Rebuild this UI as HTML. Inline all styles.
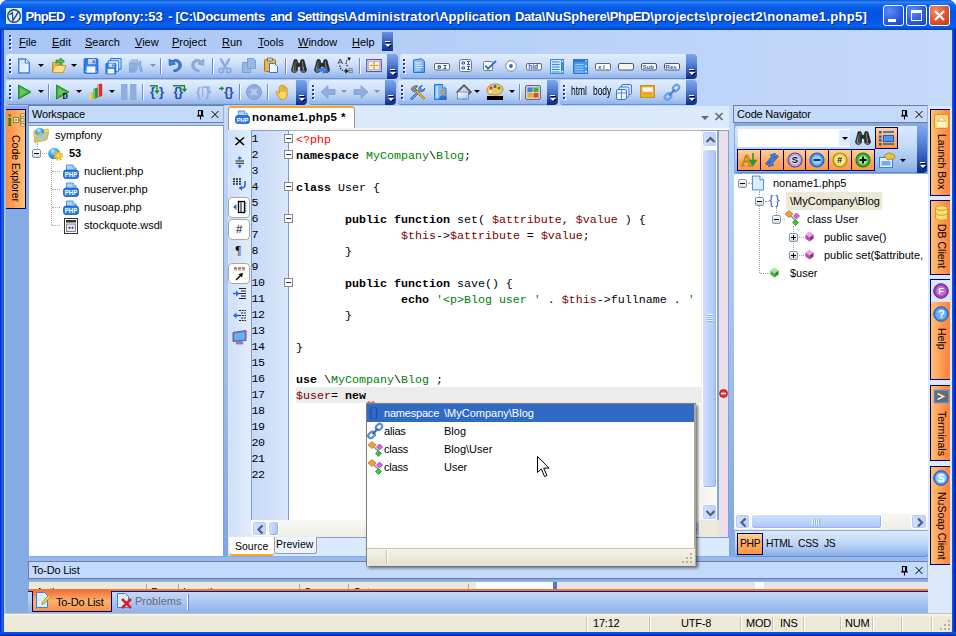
<!DOCTYPE html>
<html><head><meta charset="utf-8"><title>PhpED - sympfony::53</title>
<style>
*{box-sizing:border-box;margin:0;padding:0}
html,body{width:956px;height:636px;overflow:hidden;background:#fff}
body{position:relative;font-family:"Liberation Sans",sans-serif;font-size:11px;color:#000;line-height:1}
div,span,svg,i,b{position:absolute;white-space:nowrap}
u{text-decoration:underline}
svg{overflow:visible}
#win{left:0;top:0;width:956px;height:636px;background:linear-gradient(to right,#0019cf 0,#0831d9 1px,#166aee 2px,#0855dd 4px,#0855dd 952px,#0a5bd8 953px,#0831d9 954px,#001ea0 956px);border-radius:8px 8px 0 0;overflow:hidden}
#title{left:0;top:0;width:956px;height:30px;background:linear-gradient(#0a54d8 0,#2f86f5 7%,#0a62ec 17%,#0454e0 40%,#0458e8 70%,#0762f3 86%,#0450d8 94%,#0340b8 100%)}
#title .t{left:25px;top:10px;color:#fff;font-weight:bold;font-size:13px;text-shadow:1px 1px 0 #0c2c86}
.wb{top:5px;width:21px;height:21px;border:1px solid #fff;border-radius:3px;background:radial-gradient(circle at 30% 25%,#5b8cf4,#2a5be0 60%,#1c45c4)}
.wb.x{background:radial-gradient(circle at 30% 25%,#ee8a6a,#d9502c 60%,#b8391a)}
#client{left:4px;top:30px;width:948px;height:602px;background:#84abe3;overflow:hidden}
#dock{left:0;top:0;width:948px;height:76px;background:linear-gradient(to right,#a9c5f5,#c4dafa)}
.mi{top:37px;font-size:11px}
.tb{height:24px;border-radius:3px 0 0 3px;background:linear-gradient(#e1edfd 0,#cfe0fa 40%,#b0cbf3 75%,#8fb3e9 100%);box-shadow:0 1px 0 #6a8ccc}
.tbend{width:11px;height:25px;border-radius:0 4px 4px 0;background:linear-gradient(#80a6e8 0,#5a86d8 35%,#2a56b8 70%,#0a2a8a 100%)}
.chev{width:6px;height:7px}
.chev:before{content:"";position:absolute;left:1px;top:1px;width:5px;height:1px;background:#000;box-shadow:none}
.chev:after{content:"";position:absolute;left:0;top:0;width:5px;height:1px;background:#fff}
.chev i{left:0;top:3px;width:0;height:0;border-left:3px solid transparent;border-right:3px solid transparent;border-top:3px solid #fff;filter:drop-shadow(1px 1px 0 #000)}
.grip{left:3px;top:5px;width:3px;height:16px;background:repeating-linear-gradient(#24408c 0,#24408c 2px,transparent 2px,transparent 4px) 0 0/2px 15px no-repeat,repeating-linear-gradient(#fff 0,#fff 2px,transparent 2px,transparent 4px) 1px 1px/2px 15px no-repeat}
.sep{top:4px;width:2px;height:16px;border-left:1px solid #6a8ccc;border-right:1px solid #f4f8fe}
.dd{width:0;height:0;border-left:3px solid transparent;border-right:3px solid transparent;border-top:3px solid #000}
.dd.g{border-top-color:#8d8d8d}
.phdr{height:18px;background:#c4dafa;border:1px solid #7b8ca8;border-color:#6f7f9c #9fb4d6 #6f7f9c #6f7f9c;font-size:11px}
.phdr span{left:3px;top:3px;letter-spacing:-.2px}
.vt{width:20px;border:1px solid #00007c;border-right:none;background:linear-gradient(to right,#ffc274,#ff8a46 80%,#ff8240)}
.vt .l{writing-mode:vertical-rl;font-size:10.5px;line-height:13px;width:13px}
.ln{left:251.500px;font-family:"Liberation Mono",monospace;font-size:11.670px;letter-spacing:-.6px;line-height:16px}
.cl{left:296px;font-family:"Liberation Mono",monospace;font-size:11.67px;line-height:16px;white-space:pre}
.cl b{position:static;font-weight:normal}
.cl b.k{font-weight:bold}.cl b.r{color:#f00}.cl b.g{color:#008000}.cl b.m{color:#800000}
.sbb{border:1px solid #fff;border-radius:3px;background:linear-gradient(to right,#d3e1fd,#bdd0fb);box-shadow:inset 0 0 0 1px #b8cbf6}
.sbt{border:1px solid #fff;border-radius:3px;background:linear-gradient(to right,#d0dffc,#b9cdfb 70%,#a9c0f6);box-shadow:inset -1px -1px 0 #98b4ee}
</style></head><body>
<div id="win">
<div id="title">
 <svg style="left:6px;top:8px" width="16" height="16" viewBox="0 0 16 16"><rect x="0" y="0" width="16" height="16" fill="#d9e7f6"/><circle cx="8" cy="8" r="6.300" fill="#e4eef9" stroke="#1d4877" stroke-width="1.400"/><path d="M3.200 6.800L6.400 4.600L6.900 12.600L12.400 3.800" fill="none" stroke="#1d4877" stroke-width="1.300"/></svg>
 <span class="t" style="left:25.5px;letter-spacing:-0.68px">PhpED</span><span class="t" style="left:70.3px;letter-spacing:-0.34px">-</span><span class="t" style="left:78.3px;letter-spacing:-0.01px">sympfony::53</span><span class="t" style="left:168.2px;letter-spacing:-0.34px">-</span><span class="t" style="left:175.5px;letter-spacing:-0.23px">[C:\Documents</span><span class="t" style="left:270.5px;letter-spacing:-0.58px">and</span><span class="t" style="left:296.9px;letter-spacing:-0.50px">Settings</span><span class="t" style="left:344.2px;letter-spacing:0.18px">\Administrator</span><span class="t" style="left:435.5px;letter-spacing:0.04px">\Application</span><span class="t" style="left:515.1px;letter-spacing:-0.42px">Data</span><span class="t" style="left:541.8px;letter-spacing:-0.02px">\NuSphere</span><span class="t" style="left:606.6px;letter-spacing:-0.47px">\PhpED</span><span class="t" style="left:650.2px;letter-spacing:0.17px">\projects</span><span class="t" style="left:706.2px;letter-spacing:0.29px">\project2</span><span class="t" style="left:763.3px;letter-spacing:0.30px">\noname1.php5]</span>
 <div class="wb" style="left:883px"><div style="left:4px;top:13px;width:8px;height:3px;background:#fff"></div></div>
 <div class="wb" style="left:906px"><div style="left:4px;top:4px;width:11px;height:11px;border:1px solid #fff;border-top-width:3px"></div></div>
 <div class="wb x" style="left:929px"><svg style="left:4px;top:4px" width="11" height="11" viewBox="0 0 11 11"><path d="M1 1 L10 10 M10 1 L1 10" stroke="#fff" stroke-width="2.2"/></svg></div>
</div>
<div id="client"><div id="s" style="left:-4px;top:-30px;width:956px;height:636px">

<div id="dock" style="left:4px;top:30px"></div>
<!-- menu -->
<div class="grip" style="left:9px;top:35px;height:15px"></div>
<span class="mi" style="left:19px"><u>F</u>ile</span>
<span class="mi" style="left:52px"><u>E</u>dit</span>
<span class="mi" style="left:85px"><u>S</u>earch</span>
<span class="mi" style="left:135px"><u>V</u>iew</span>
<span class="mi" style="left:172px"><u>P</u>roject</span>
<span class="mi" style="left:222px"><u>R</u>un</span>
<span class="mi" style="left:258px"><u>T</u>ools</span>
<span class="mi" style="left:298px"><u>W</u>indow</span>
<span class="mi" style="left:352px"><u>H</u>elp</span>
<div style="left:382px;top:32px;width:11px;height:19px;background:linear-gradient(#6a92e0,#3a66c4 50%,#0c2f92)"><div class="chev" style="left:3px;top:9px"><i></i></div></div>
<!-- toolbars -->
<div class="tb" style="left:6px;top:54px;width:382px"><div class="grip"></div></div>
<div class="tbend" style="left:387px;top:54px"><div class="chev" style="left:3px;top:15px"><i></i></div></div>
<div class="tb" style="left:400px;top:54px;width:287px"><div class="grip"></div></div>
<div class="tbend" style="left:686px;top:54px"><div class="chev" style="left:3px;top:15px"><i></i></div></div>
<div class="tb" style="left:6px;top:80px;width:291px"><div class="grip"></div></div>
<div class="tbend" style="left:296px;top:80px"><div class="chev" style="left:3px;top:15px"><i></i></div></div>
<div class="tb" style="left:309px;top:80px;width:77px"><div class="grip"></div></div>
<div class="tbend" style="left:385px;top:80px"><div class="chev" style="left:3px;top:15px"><i></i></div></div>
<div class="tb" style="left:398px;top:80px;width:150px"><div class="grip"></div></div>
<div class="tbend" style="left:547px;top:80px"><div class="chev" style="left:3px;top:15px"><i></i></div></div>
<div class="tb" style="left:560px;top:80px;width:127px"><div class="grip"></div></div>
<div class="tbend" style="left:686px;top:80px"><div class="chev" style="left:3px;top:15px"><i></i></div></div>
<svg style="left:16px;top:58px" width="16" height="16" viewBox="0 0 16 16"><defs><linearGradient id="dg" x1="0" y1="0" x2="1" y2="1"><stop offset="0" stop-color="#cfe4fb"/><stop offset="1" stop-color="#f4faff"/></linearGradient></defs><path d="M2.700 1h6.800l3.800 3.800v10.200h-10.600z" fill="url(#dg)" stroke="#3b82e0" stroke-width="1.400"/><path d="M9.300 1v4h4" fill="#e8f3fe" stroke="#3b82e0" stroke-width="1.100"/></svg>
<div class="dd" style="left:38px;top:64px"></div>
<svg style="left:51px;top:57px" width="16" height="16" viewBox="0 0 16 16"><path d="M1.500 15V5.500h3.500l1.200 1.500h5.300v2" fill="#e9b935" stroke="#b98d1e" stroke-width=".9"/><path d="M1.500 15.500L3.800 8.500h11l-2.600 7z" fill="#fbe18c" stroke="#c39a24" stroke-width=".9"/><path d="M5 3h4.200V1l4.300 3.300-4.300 3.300v-2H5z" fill="#4fc24f" stroke="#1f8a1f" stroke-width=".8"/></svg>
<div class="dd" style="left:71px;top:64px"></div>
<svg style="left:83px;top:58px" width="16" height="16" viewBox="0 0 16 16"><rect x="1.200" y=".800" width="13.600" height="14.400" rx=".6" fill="#2482f2" stroke="#0f5fd2" stroke-width="1"/><rect x="5" y="1.400" width="7.600" height="4.800" fill="#cfcfcf"/><rect x="5" y="1.400" width="7.600" height="1.500" fill="#e6e6e6"/><rect x="9.700" y="2.300" width="2" height="3" fill="#2482f2"/><rect x="3.600" y="8.400" width="8.800" height="6.300" fill="#f7f4ec"/><rect x="2" y="13.200" width="1" height="1" fill="#cfe4fc"/><rect x="13" y="13.200" width="1" height="1" fill="#cfe4fc"/></svg>
<svg style="left:105px;top:58px" width="17" height="17" viewBox="0 0 17 17"><rect x="5.500" y=".600" width="10.500" height="10.500" rx=".6" fill="#eaf3fe" stroke="#1f78ea" stroke-width="1.100"/><rect x="3.200" y="2.700" width="10.500" height="10.500" rx=".6" fill="#eaf3fe" stroke="#1f78ea" stroke-width="1.100"/><g transform="translate(0,4.700) scale(.74)"><rect x="1.200" y=".800" width="13.600" height="14.400" rx=".6" fill="#2482f2" stroke="#0f5fd2" stroke-width="1"/><rect x="5" y="1.400" width="7.600" height="4.800" fill="#cfcfcf"/><rect x="5" y="1.400" width="7.600" height="1.500" fill="#e6e6e6"/><rect x="9.700" y="2.300" width="2" height="3" fill="#2482f2"/><rect x="3.600" y="8.400" width="8.800" height="6.300" fill="#f7f4ec"/><rect x="2" y="13.200" width="1" height="1" fill="#cfe4fc"/><rect x="13" y="13.200" width="1" height="1" fill="#cfe4fc"/></g></svg>
<svg style="left:128px;top:58px" width="16" height="16" viewBox="0 0 16 16"><path d="M1 4.500l2.500-3h6.500v10l-2.500 3H1z" fill="#90b1e3"/><path d="M1 4.500h6.500v10H1z" fill="#86a9de"/><path d="M1 4.500l2.500-3h6.500l-2.500 3z" fill="#a5c1ea"/><path d="M2 7h4.500M2 9h4.500" stroke="#a5c1ea" stroke-width=".8"/><path d="M11 3.500l1.200-1.500 1.300 2.200-.5 2 2 7-1.600 1.300-1.700-1-1-5.500-1-1.500z" fill="#8aacdf"/></svg>
<div class="dd g" style="left:150px;top:64px"></div>
<div class="sep" style="left:160px;top:58px"></div>
<svg style="left:167px;top:57px" width="16" height="16" viewBox="0 0 16 16"><path d="M2 2.2l.4 6.2 6-1.4-2.3-1.6c2.6-1.6 5.6-.2 5.8 2.6.2 2.6-1.8 4.6-5.2 5.2l.4 1.6c4.8-.6 7.6-3.4 7.2-7.2C13.8 3 9.200 1 5 3.800z" fill="#3f80dc" stroke="#1d56b0" stroke-width=".8"/></svg>
<svg style="left:190px;top:57px" width="16" height="16" viewBox="0 0 16 16"><g transform="translate(16,0) scale(-1,1)"><path d="M2 2.2l.4 6.2 6-1.4-2.3-1.600c2.600-1.600 5.600-.2 5.800 2.600.2 2.600-1.800 4.600-5.200 5.200l.4 1.600c4.800-.6 7.600-3.400 7.200-7.200C13.800 3 9.200 1 5 3.800z" fill="#8eaede" stroke="#7d9fd4" stroke-width=".8"/></g></svg>
<div class="sep" style="left:212px;top:58px"></div>
<svg style="left:217px;top:58px" width="16" height="16" viewBox="0 0 16 16"><path d="M3.500 .5l5.500 10M12.500 .5L7 10.500" stroke="#86a8de" stroke-width="2.400" fill="none"/><circle cx="4.300" cy="12.500" r="2.200" fill="none" stroke="#86a8de" stroke-width="1.700"/><circle cx="11.700" cy="12.500" r="2.200" fill="none" stroke="#86a8de" stroke-width="1.700"/></svg>
<svg style="left:241px;top:57px" width="16" height="16" viewBox="0 0 16 16"><path d="M1.500 5.500h6l2 2v8h-8z" fill="#9ab8e6" stroke="#7d9fd4"/><path d="M6.500 1.500h6l2 2v8h-8z" fill="#9ab8e6" stroke="#7d9fd4"/></svg>
<svg style="left:263px;top:57px" width="16" height="16" viewBox="0 0 16 16"><rect x="1.500" y="2.500" width="11" height="12" rx="1" fill="#e9b94a" stroke="#a37a18"/><rect x="4.500" y="1" width="5" height="3" fill="#c8c8d0" stroke="#666" stroke-width=".7"/><path d="M6.500 6.500h5l3 3v6h-8z" fill="#eef5fd" stroke="#3a78d0"/></svg>
<div class="sep" style="left:285px;top:58px"></div>
<svg style="left:291px;top:58px" width="17" height="16" viewBox="0 0 17 16"><path d="M3 2.200c0-1 3.200-1 3.200 0l.6 3h2.400l.6-3c0-1 3.200-1 3.200 0l2.500 9.500c.3 3.800-6.300 3.800-6-.2v-3h-3v3c.3 4-6.300 4-6 .2z" fill="#2b2b2b" stroke="#000" stroke-width=".5"/><path d="M3.600 3l-2 8.500c0 1.500 1 2 1.500 2z" fill="#8c8c8c"/><path d="M10.800 2.600l.5 0 1.800 9-1.200.6z" fill="#9a9a9a"/><path d="M4.500 2.500l1 0-.5 9-1.200 1z" fill="#555"/><ellipse cx="3.700" cy="13.300" rx="2.300" ry="1.100" fill="#6a6a6a"/><ellipse cx="12.300" cy="13.300" rx="2.300" ry="1.100" fill="#6a6a6a"/></svg>
<svg style="left:314px;top:58px" width="17" height="16" viewBox="0 0 17 16"><path d="M3 2.200c0-1 3.200-1 3.200 0l.6 3h2.400l.6-3c0-1 3.200-1 3.200 0l2.500 9.500c.3 3.800-6.300 3.800-6-.2v-3h-3v3c.3 4-6.300 4-6 .2z" fill="#2b2b2b" stroke="#000" stroke-width=".5"/><path d="M3.600 3l-2 8.500c0 1.500 1 2 1.500 2z" fill="#8c8c8c"/><path d="M10.800 2.600l.5 0 1.800 9-1.200.6z" fill="#9a9a9a"/><path d="M4.500 2.500l1 0-.5 9-1.200 1z" fill="#555"/><ellipse cx="3.700" cy="13.300" rx="2.300" ry="1.100" fill="#6a6a6a"/><ellipse cx="12.300" cy="13.300" rx="2.300" ry="1.100" fill="#6a6a6a"/><path d="M3 10.500h6V8.200l5 3.600-5 3.600v-2.300H3z" fill="#3f8ae8" stroke="#1d56b0" stroke-width=".6"/></svg>
<svg style="left:337px;top:57px" width="18" height="18" viewBox="0 0 18 18"><text x="0.500" y="7" font-size="8" font-family="Liberation Sans,sans-serif" fill="#222">A</text><text x="11" y="16" font-size="8" font-family="Liberation Sans,sans-serif" fill="#666">B</text><path d="M3 8.500c0 4 2.500 5.500 6 5.500" fill="none" stroke="#111" stroke-width="1.200" stroke-dasharray="1.300 1.200"/><path d="M8.500 11.300l3 2.700-3 2.700z" fill="#111"/><path d="M10.500 9c-2-1.500-2-5.500 1.500-7.500" fill="none" stroke="#111" stroke-width="1.200" stroke-dasharray="1.300 1.200"/><path d="M10.500 .3l3.300.5-1.500 3z" fill="#111"/></svg>
<div class="sep" style="left:359px;top:58px"></div>
<svg style="left:366px;top:58px" width="16" height="15" viewBox="0 0 18 17"><rect x=".7" y="1.700" width="16.600" height="13.600" fill="#d9d3ea" stroke="#5c5a92" stroke-width="1.200"/><rect x="3" y="4" width="12" height="9" fill="#faf0dc" stroke="#a9a2c8" stroke-width=".8"/><path d="M9 5v7M5 8.500h8" stroke="#e8a020" stroke-width="1.100"/><path d="M9 4.300l1.500 1.700h-3zM9 12.700l1.500-1.700h-3zM4.300 8.500l1.700-1.500v3zM13.700 8.500l-1.700-1.500v3z" fill="#e8a020"/></svg>
<svg style="left:411px;top:58px" width="17" height="17" viewBox="0 0 17 17"><defs><linearGradient id="fg" x1="0" y1="0" x2="1" y2="1"><stop offset="0" stop-color="#a8d2fa"/><stop offset="1" stop-color="#4e9aea"/></linearGradient></defs><path d="M2.500 2l8-1.300 3 2.500v11.300h-11z" fill="url(#fg)" stroke="#2a72d0"/><path d="M4.500 5h6M4.500 7.300h7M4.500 9.600h7M4.500 11.900h5" stroke="#e4f1fe" stroke-width="1"/></svg>
<svg style="left:434px;top:58px" width="17" height="17" viewBox="0 0 17 17"><rect x="0.5" y="5.5" width="15" height="6.5" rx="1.5" fill="#fff" stroke="#666"/><path d="M4 7.800h2.500v2.500H4zM4 8.700h2.500" fill="none" stroke="#1a5ac0" stroke-width="1"/><path d="M9.500 7.500h3M11 7.500v3M9.500 10.500h3" stroke="#1a5ac0" stroke-width="1" fill="none"/></svg>
<svg style="left:457px;top:58px" width="17" height="17" viewBox="0 0 17 17"><rect x="2.5" y="1.5" width="12" height="12" rx="2" fill="#f4f8fe" stroke="#777"/><path d="M5 4h2.500v2H5zM5 9h2.500v2H5z" fill="none" stroke="#1a5ac0" stroke-width="1"/><path d="M10 3.500h3M11.500 3.500v3M10 6.500h3M10 8.500h3M11.500 8.500v3M10 11.500h3" stroke="#1a5ac0" stroke-width="1" fill="none"/></svg>
<svg style="left:482px;top:58px" width="17" height="17" viewBox="0 0 17 17"><rect x="1.500" y="3.500" width="9" height="9" rx="1" fill="#f4f8fe" stroke="#777"/><path d="M3.300 7.500l2.700 3.200L14 3" fill="none" stroke="#2a6ad0" stroke-width="1.800"/></svg>
<svg style="left:503px;top:58px" width="17" height="17" viewBox="0 0 17 17"><circle cx="8" cy="8" r="5.300" fill="#fff" stroke="#8a8a8a"/><circle cx="8" cy="8" r="1.900" fill="#2a6ad0"/></svg>
<svg style="left:526px;top:58px" width="17" height="17" viewBox="0 0 17 17"><rect x="0.5" y="5.5" width="15" height="6.5" rx="1.5" fill="#fff" stroke="#666"/><text x="2.3" y="11" font-size="6.5" font-family="Liberation Sans,sans-serif" fill="#1a5ac0" font-weight="bold">hid</text></svg>
<svg style="left:549px;top:58px" width="17" height="17" viewBox="0 0 17 17"><rect x="1.500" y="1.500" width="13" height="14" fill="#cfe6fc" stroke="#3a8ae0"/><path d="M3 4h7.500M3 6.500h7.500M3 9h7.500M3 11.500h7.500M3 14h7.500" stroke="#3a8ae0" stroke-width="1"/><rect x="12" y="1.500" width="3" height="14" fill="#3a8ae0"/><rect x="12.800" y="2.500" width="1.400" height="1.400" fill="#fff"/><rect x="12.800" y="13" width="1.400" height="1.400" fill="#fff"/></svg>
<svg style="left:572px;top:58px" width="17" height="17" viewBox="0 0 17 17"><rect x="1.500" y="1.500" width="14" height="14" fill="#4a9af0" stroke="#2a78d8"/><path d="M3 4h8.500M3 6.500h8.500M3 9h8.500M3 11.500h8.500M3 14h8.500" stroke="#9ccaf8" stroke-width="1"/><rect x="1.500" y="1.500" width="14" height="3" fill="#2a78d8"/><rect x="13.300" y="2.300" width="1.400" height="1.400" fill="#fff"/><rect x="13.300" y="7.500" width="1.400" height="1.400" fill="#fff"/><rect x="13.300" y="13" width="1.400" height="1.400" fill="#fff"/></svg>
<svg style="left:595px;top:58px" width="17" height="17" viewBox="0 0 17 17"><rect x="0.5" y="5.5" width="15" height="6.5" rx="1.5" fill="#fff" stroke="#666"/><text x="3" y="10.8" font-size="6" font-family="Liberation Sans,sans-serif" fill="#1a5ac0" font-weight="bold">x I</text></svg>
<svg style="left:618px;top:58px" width="17" height="17" viewBox="0 0 17 17"><rect x="0.5" y="5.5" width="15" height="6.5" rx="1.5" fill="#f4f4f4" stroke="#555"/></svg>
<svg style="left:641px;top:58px" width="17" height="17" viewBox="0 0 17 17"><rect x="0.5" y="5.5" width="15" height="6.5" rx="1.5" fill="#fff" stroke="#555"/><text x="1.6" y="11" font-size="6" font-family="Liberation Sans,sans-serif" fill="#1a5ac0" font-weight="bold">Sub</text></svg>
<svg style="left:664px;top:58px" width="17" height="17" viewBox="0 0 17 17"><rect x="0.5" y="5.5" width="15" height="6.5" rx="1.5" fill="#fff" stroke="#555"/><text x="1.6" y="11" font-size="6" font-family="Liberation Sans,sans-serif" fill="#1a5ac0" font-weight="bold">Res</text></svg>
<svg style="left:17px;top:84px" width="16" height="16" viewBox="0 0 16 16"><path d="M1.500 1l12.500 7L1.500 15z" fill="#3fae3f" stroke="#2a8a2a"/><path d="M3.200 4l7.300 4-7.300 4z" fill="#7ad27a" opacity=".7"/></svg>
<div class="dd" style="left:38px;top:90px"></div>
<div class="sep" style="left:48px;top:84px"></div>
<svg style="left:55px;top:84px" width="16" height="17" viewBox="0 0 16 17"><path d="M1.500 1l12.500 7L1.500 15z" fill="#3fae3f" stroke="#2a8a2a"/><path d="M3.200 4l7.300 4-7.300 4z" fill="#7ad27a" opacity=".7"/><text x="7.500" y="15" font-size="7.500" font-weight="bold" font-family="Liberation Serif,serif" fill="#000">D</text></svg>
<div class="dd" style="left:76px;top:90px"></div>
<svg style="left:89px;top:83px" width="14" height="17" viewBox="0 0 14 17"><path d="M.5 10.500l2.500-1 2 .5v6l-2.500 1-2-.5z" fill="#e9b935"/><path d="M.5 10.500l2 .5v6l-2-.5z" fill="#f6d466"/><path d="M4.500 6l3-1.200 1.500.4v9.300l-3 1.200-1.500-.4z" fill="#1f9a3a"/><path d="M4.500 6l1.500.4v9.300l-1.500-.4z" fill="#6fd07f"/><path d="M8.700 1.700l3-1.200 1.500.4v12l-3 1.200-1.500-.4z" fill="#e02828"/><path d="M8.700 1.700l1.500.4v12l-1.500-.4z" fill="#f48a8a"/></svg>
<div class="dd" style="left:109px;top:90px"></div>
<svg style="left:121px;top:84px" width="16" height="16" viewBox="0 0 16 16"><rect x="0" y="0" width="6.500" height="16" fill="#8eaede"/><rect x="9" y="0" width="6.500" height="16" fill="#8eaede"/></svg>
<div class="sep" style="left:142px;top:84px"></div>
<svg style="left:150px;top:85px" width="16" height="16" viewBox="0 0 16 16"><text x="0" y="10.700" font-size="13" font-weight="bold" font-family="Liberation Sans,sans-serif" fill="#1a4fb0">{</text><text x="9" y="10.700" font-size="13" font-weight="bold" font-family="Liberation Sans,sans-serif" fill="#1a4fb0">}</text><path d="M0 .7h7v5" stroke="#1a8a1a" fill="none" stroke-width="1.400"/><path d="M4.300 5.500h5.400L7 9z" fill="#1a8a1a"/></svg>
<svg style="left:173px;top:85px" width="17" height="17" viewBox="0 0 17 17"><text x="0.500" y="10.700" font-size="13" font-weight="bold" font-family="Liberation Sans,sans-serif" fill="#1a4fb0" letter-spacing="-.6">{}</text><path d="M0 .7h11.500v3.500" stroke="#1a8a1a" fill="none" stroke-width="1.400"/><path d="M8.800 3.800h5.400L11.500 7.300z" fill="#1a8a1a"/></svg>
<svg style="left:196px;top:85px" width="17" height="17" viewBox="0 0 17 17"><text x="0" y="10.700" font-size="13" font-weight="bold" font-family="Liberation Sans,sans-serif" fill="#8eaede">{</text><text x="9" y="10.700" font-size="13" font-weight="bold" font-family="Liberation Sans,sans-serif" fill="#8eaede">}</text><path d="M6.700 12V2h6.500v4.500" stroke="#8eaede" fill="none" stroke-width="1.300"/><path d="M10.800 6h4.800l-2.400 3z" fill="#8eaede"/></svg>
<svg style="left:219px;top:85px" width="17" height="17" viewBox="0 0 17 17"><text x="5" y="10.700" font-size="13" font-weight="bold" font-family="Liberation Sans,sans-serif" fill="#1a4fb0" letter-spacing="-.6">{}</text><path d="M0 3.500h3" stroke="#1a8a1a" stroke-width="1.400"/><path d="M2.300 1l2.700 2.500-2.700 2.500z" fill="#1a8a1a"/></svg>
<div class="sep" style="left:239px;top:84px"></div>
<svg style="left:246px;top:84px" width="16" height="16" viewBox="0 0 16 16"><circle cx="8" cy="8" r="7.500" fill="#8eaede" stroke="#7d9fd4"/><path d="M5 5l6 6M11 5l-6 6" stroke="#b6ccef" stroke-width="2.400"/></svg>
<div class="sep" style="left:267px;top:84px"></div>
<svg style="left:275px;top:84px" width="16" height="16" viewBox="0 0 16 16"><path d="M4.200 9.500V3.300c0-1.400 1.900-1.400 1.900 0V1.800c0-1.400 2-1.400 2 0v1c0-1.400 2-1.400 2 0v1.700c0-1.300 1.900-1.300 1.900 0V11c0 3-1.500 4.500-4.200 4.500-2.500 0-3.500-1-4.500-3L1.200 8.700c-.6-1.300 1-2.100 1.700-1z" fill="#ffd45e" stroke="#c48c10" stroke-width=".9"/><path d="M6.100 3.300v4.500M8.100 2.800v5M10.100 4.500v3.500" stroke="#c48c10" stroke-width=".8" fill="none"/></svg>
<svg style="left:320px;top:84px" width="16" height="16" viewBox="0 0 16 16"><path d="M1 8l7-6.500v4h7v5H8v4z" fill="#8eaede" stroke="#7d9fd4" stroke-width=".8"/></svg>
<div class="dd g" style="left:341px;top:90px"></div>
<svg style="left:353px;top:84px" width="16" height="16" viewBox="0 0 16 16"><g transform="translate(16,0) scale(-1,1)"><path d="M1 8l7-6.500v4h7v5H8v4z" fill="#8eaede" stroke="#7d9fd4" stroke-width=".8"/></g></svg>
<div class="dd g" style="left:374px;top:90px"></div>
<svg style="left:409px;top:84px" width="17" height="17" viewBox="0 0 17 17"><path d="M1.500 14.500L10 6c-.8-2 .5-4.500 3.500-4.500l-2 2.200.6 1.700 1.700.6 2-2c.3 2.800-2.300 4.300-4.500 3.500L3 16z" fill="#5a9cec" stroke="#1d56b0" stroke-width=".7"/><path d="M14.500 15.500L6 7l1.500-1.500L16 14z" fill="#f0a838" stroke="#9a6a10" stroke-width=".7"/><path d="M2 5.500c1-3 4-4.500 7-3.500L6.500 4.500 8 6 5.500 8.500z" fill="#8a8a8a" stroke="#555" stroke-width=".7"/></svg>
<svg style="left:433px;top:84px" width="15" height="17" viewBox="0 0 15 17"><path d="M1.500 .5h8l3.500 3.500v11.500h-11.500z" fill="#7ab8f4" stroke="#2a72d0"/><path d="M9.500 .5v3.500h3.500" fill="#d4e8fc" stroke="#2a72d0" stroke-width=".8"/><path d="M3 2.500h2v11H3z" fill="#d4e8fc" opacity=".8"/><circle cx="10" cy="8" r="2" fill="#f0a040" stroke="#a86a18" stroke-width=".5"/><path d="M6.500 15c0-4.500 7-4.500 7 0z" fill="#2a78e0" stroke="#1a4fa8" stroke-width=".5"/></svg>
<svg style="left:456px;top:84px" width="16" height="16" viewBox="0 0 16 16"><defs><linearGradient id="hg" x1="0" y1="0" x2="1" y2="1"><stop offset="0" stop-color="#fff"/><stop offset="1" stop-color="#9cc4f4"/></linearGradient></defs><path d="M8 .5l7.500 7.500L8 15.500.5 8z" fill="#5a5a5a" stroke="#333" stroke-width=".7"/><path d="M8 2.500l5.500 5.500H2.500z" fill="#d8d8d8"/><rect x="1.500" y="8" width="11" height="7" fill="url(#hg)" stroke="#6a7a9a" stroke-width=".8"/></svg>
<div class="dd" style="left:474px;top:90px"></div>
<svg style="left:486px;top:83px" width="18" height="18" viewBox="0 0 18 18"><path d="M9 1C4 1 1 4 1 7.500c0 3 2.500 4.500 4.500 4 1.500-.5 2 .5 3.500.5 4 0 8-2 8-6 0-3-3.500-5-8-5z" fill="#f0c860" stroke="#a87a18" stroke-width=".8"/><circle cx="5" cy="5" r="1.500" fill="#e03030"/><circle cx="9" cy="3.500" r="1.500" fill="#3060e0"/><circle cx="13" cy="5" r="1.500" fill="#30a030"/><circle cx="4.500" cy="8.500" r="1.300" fill="#fff"/><rect x="1" y="13" width="16" height="4" fill="#000"/></svg>
<div class="dd" style="left:509px;top:90px"></div>
<div class="sep" style="left:519px;top:84px"></div>
<svg style="left:525px;top:85px" width="17" height="17" viewBox="0 0 17 17"><rect x=".5" y=".5" width="15" height="14" rx="1.500" fill="#d8d0c0" stroke="#6a6a6a"/><rect x="2.500" y="2.500" width="5" height="4.500" fill="#3a80e8"/><rect x="8.500" y="2.500" width="5" height="4.500" fill="#3ab048"/><rect x="2.500" y="8" width="5" height="4.500" fill="#f0a828"/><rect x="8.500" y="8" width="5" height="4.500" fill="#e84828"/></svg>
<span style="left:571px;top:85px;font-size:12px;transform:scaleX(.7);transform-origin:0 0">html</span>
<span style="left:593px;top:85px;font-size:12px;transform:scaleX(.7);transform-origin:0 0">body</span>
<svg style="left:616px;top:84px" width="16" height="16" viewBox="0 0 16 16"><rect x="5.500" y=".5" width="10" height="10" rx="1.500" fill="#dcebfc" stroke="#3a78d0"/><rect x="3" y="3" width="10" height="10" rx="1.500" fill="#dcebfc" stroke="#3a78d0"/><rect x=".5" y="5.500" width="10" height="10" rx="1.500" fill="#eef5fd" stroke="#3a78d0"/><path d="M.5 9h10M5.500 5.500v10" stroke="#3a78d0" stroke-width=".8"/></svg>
<svg style="left:640px;top:85px" width="15" height="13" viewBox="0 0 15 13"><rect x=".7" y=".7" width="13.600" height="11.600" fill="#f8c030" stroke="#c08a10" stroke-width="1.200"/><rect x="2.500" y="2.500" width="10" height="4" fill="#eaf4fe"/><rect x="2.500" y="6" width="10" height="4.500" fill="#f0a030"/><path d="M2.500 7l4-1.500 3 1 3-1v1.500z" fill="#eaf4fe"/></svg>
<svg style="left:663px;top:84px" width="18" height="17" viewBox="0 0 18 17"><g fill="none" stroke="#6a9ee0" stroke-width="2.200"><rect x="9.500" y="1.500" width="7" height="5" rx="2.500" transform="rotate(-40 13 4)"/><rect x="1.500" y="10" width="7" height="5" rx="2.500" transform="rotate(-40 5 12.500)"/><path d="M6 11.500L12 5.500" stroke="#4a7ec8"/></g></svg>
<!-- left dock strip -->
<div style="left:4px;top:106px;width:2px;height:507px;background:linear-gradient(to right,#a8c8f8,#95b8ee)"></div>
<div class="vt" style="left:6px;top:109px;width:20px;height:100px;border-right:1px solid #00007c;border-left:none;background:linear-gradient(to right,#ff8a44,#ff9a52 30%,#ffc274)">
 <svg style="left:1px;top:1px" width="17" height="18" viewBox="0 0 17 18"><text x="0" y="15" font-size="17" font-weight="bold" font-family="Liberation Serif,serif" fill="#1a8a1a">i</text><rect x="6.500" y="6.500" width="5" height="5" fill="#f8e8a0" stroke="#8a8a3a"/><path d="M11.500 9h2M13.500 4v10M13.500 4h1.500M13.500 14h1.500" stroke="#8a8a3a" fill="none"/><rect x="14" y="2.500" width="3" height="3" fill="#f8e8a0" stroke="#8a8a3a" stroke-width=".7"/><rect x="14" y="7.500" width="3" height="3" fill="#f8e8a0" stroke="#8a8a3a" stroke-width=".7"/><rect x="14" y="12.500" width="3" height="3" fill="#f8e8a0" stroke="#8a8a3a" stroke-width=".7"/><path d="M8 9h2M9 8v2" stroke="#3a6ad0" stroke-width=".8"/></svg>
 <span class="l" style="left:3px;top:25px">Code Explorer</span>
</div>
<!-- workspace panel -->
<div class="phdr" style="left:28px;top:105px;width:196px"><span>Workspace</span>
 <svg style="left:168px;top:4px" width="7" height="10" viewBox="0 0 7 10"><path d="M1.500 .5h4v5h-4zM4.500 .5v5M0 6h7M3.500 6v3.500" stroke="#000" fill="none" stroke-width="1.100"/></svg>
 <svg style="left:182px;top:5px" width="8" height="7" viewBox="0 0 8 7"><path d="M.5 0l7 7M7.500 0l-7 7" stroke="#000" stroke-width="1"/></svg>
</div>
<div style="left:29px;top:123px;width:195px;height:2px;background:#b4cef6"></div>
<div style="left:29px;top:125px;width:195px;height:431px;background:#fff;border-top:1px solid #7b9cd4;border-right:1px solid #7ba2e0"></div>
<div id="ws" style="left:29px;top:126px;width:195px;height:120px">
 <!-- tree lines -->
 <div style="left:8px;top:17px;width:1px;height:6px;border-left:1px dotted #a8a8a8"></div>
 <div style="left:13px;top:27px;width:5px;height:1px;border-top:1px dotted #a8a8a8"></div>
 <div style="left:22px;top:36px;width:1px;height:63px;border-left:1px dotted #a8a8a8"></div>
 <div style="left:23px;top:45px;width:8px;height:1px;border-top:1px dotted #a8a8a8"></div>
 <div style="left:23px;top:63px;width:8px;height:1px;border-top:1px dotted #a8a8a8"></div>
 <div style="left:23px;top:81px;width:8px;height:1px;border-top:1px dotted #a8a8a8"></div>
 <div style="left:23px;top:99px;width:8px;height:1px;border-top:1px dotted #a8a8a8"></div>
 <div style="left:3px;top:23px;width:9px;height:9px;border:1px solid #7a96c0;border-radius:2px;background:linear-gradient(#fff,#ddd8cc)"><div style="left:1px;top:3px;width:5px;height:1px;background:#000"></div></div>
 <!-- root: sympfony -->
 <svg style="left:4px;top:1px" width="17" height="16" viewBox="0 0 17 16"><defs><radialGradient id="gl1" cx=".4" cy=".3" r=".7"><stop offset="0" stop-color="#c8ecff"/><stop offset=".5" stop-color="#3aa4f4"/><stop offset="1" stop-color="#1670d0"/></radialGradient></defs><path d="M.8 4.500l2-1.500 1.500 1.500 10.500-2.500.7 1.200-1.500 9.300-12.200 3z" fill="#f8dc7c" stroke="#dba520" stroke-width=".8"/><circle cx="6.700" cy="5.200" r="4.500" fill="url(#gl1)"/><path d="M1.800 15.300l1.700-7.800 3-.6 1.600-1.500 2 .9 5.700-1.500-2.200 8.200z" fill="#a9c8ba" stroke="#e3b02a" stroke-width=".9" opacity=".93"/></svg>
 <span style="left:26px;top:4px;font-size:11px">sympfony</span>
 <svg style="left:19px;top:21px" width="16" height="15" viewBox="0 0 16 15"><defs><radialGradient id="gl2" cx=".4" cy=".3" r=".7"><stop offset="0" stop-color="#c8ecff"/><stop offset=".5" stop-color="#3aa4f4"/><stop offset="1" stop-color="#1670d0"/></radialGradient></defs><circle cx="6" cy="6.500" r="5.700" fill="url(#gl2)"/><circle cx="10.200" cy="8.700" r="4" fill="none" stroke="#e8b020" stroke-width="2.200" stroke-dasharray="1.570 1.570"/><circle cx="10.200" cy="8.700" r="3.400" fill="#f2c22a"/><circle cx="10.200" cy="8.700" r="1.200" fill="#fff0b0"/></svg>
 <span style="left:40px;top:22px;font-size:11px;font-weight:bold">53</span>
 <svg style="left:34px;top:37px" width="16" height="17" viewBox="0 0 16 17"><path d="M3.500 2h6.500l3 3v8h-9.500z" fill="#a8d4fb" stroke="#4a94e4"/><path d="M10 2v3h3" fill="#e6f2fe" stroke="#4a94e4" stroke-width=".8"/><rect x=".5" y="7" width="15" height="8.500" rx="2.500" fill="#2a7ae0" stroke="#1a5ab8" stroke-width=".8"/><text x="1.800" y="13.800" font-size="6.500" font-weight="bold" font-family="Liberation Sans,sans-serif" fill="#fff" textLength="12.500" lengthAdjust="spacingAndGlyphs">PHP</text></svg><svg style="left:34px;top:55px" width="16" height="17" viewBox="0 0 16 17"><path d="M3.500 2h6.500l3 3v8h-9.500z" fill="#a8d4fb" stroke="#4a94e4"/><path d="M10 2v3h3" fill="#e6f2fe" stroke="#4a94e4" stroke-width=".8"/><rect x=".5" y="7" width="15" height="8.500" rx="2.500" fill="#2a7ae0" stroke="#1a5ab8" stroke-width=".8"/><text x="1.800" y="13.800" font-size="6.500" font-weight="bold" font-family="Liberation Sans,sans-serif" fill="#fff" textLength="12.500" lengthAdjust="spacingAndGlyphs">PHP</text></svg><svg style="left:34px;top:73px" width="16" height="17" viewBox="0 0 16 17"><path d="M3.500 2h6.500l3 3v8h-9.500z" fill="#a8d4fb" stroke="#4a94e4"/><path d="M10 2v3h3" fill="#e6f2fe" stroke="#4a94e4" stroke-width=".8"/><rect x=".5" y="7" width="15" height="8.500" rx="2.500" fill="#2a7ae0" stroke="#1a5ab8" stroke-width=".8"/><text x="1.800" y="13.800" font-size="6.500" font-weight="bold" font-family="Liberation Sans,sans-serif" fill="#fff" textLength="12.500" lengthAdjust="spacingAndGlyphs">PHP</text></svg>
 <span style="left:55px;top:40px;font-size:11px">nuclient.php</span>
 <span style="left:55px;top:58px;font-size:11px">nuserver.php</span>
 <span style="left:55px;top:76px;font-size:11px">nusoap.php</span>
 <span style="left:55px;top:94px;font-size:11px">stockquote.wsdl</span>
 <svg style="left:35px;top:92px" width="14" height="16" viewBox="0 0 14 16"><rect x=".5" y=".5" width="13" height="15" fill="#fff" stroke="#333"/><rect x="2" y="2" width="10" height="2.500" fill="#333"/><rect x="2.500" y="6" width="9" height="7.500" fill="#e8e8f0" stroke="#555" stroke-width=".7"/><path d="M4 9.700l2-1.500v3zM10 9.700l-2-1.500v3z" fill="#3050c0"/><circle cx="7" cy="9.700" r=".8" fill="#d03030"/></svg>
</div>
<!-- editor -->
<div style="left:224px;top:106px;width:5px;height:450px;background:linear-gradient(#c6dcf8,#a4c2f0 50%,#7fa6e4)"></div>
<div style="left:729px;top:106px;width:5px;height:450px;background:linear-gradient(#c6dcf8,#a4c2f0 50%,#7fa6e4)"></div>
<div style="left:228px;top:106px;width:501px;height:450px;background:#dbe9fc"></div>
<div style="left:228px;top:106px;width:127px;height:24px;background:#fff;border:1px solid #9a9a9a;border-bottom:none;border-top:2px solid #ffa51f;border-radius:3px 3px 0 0"></div>
<svg style="left:235px;top:109px" width="15" height="16" viewBox="0 0 16 17"><path d="M3.500 2h6.500l3 3v8h-9.500z" fill="#a8d4fb" stroke="#4a94e4"/><path d="M10 2v3h3" fill="#e6f2fe" stroke="#4a94e4" stroke-width=".8"/><rect x=".5" y="7" width="15" height="8.500" rx="2.500" fill="#2a7ae0" stroke="#1a5ab8" stroke-width=".8"/><text x="1.800" y="13.800" font-size="6.500" font-weight="bold" font-family="Liberation Sans,sans-serif" fill="#fff" textLength="12.500" lengthAdjust="spacingAndGlyphs">PHP</text></svg>
<span style="left:252px;top:112px;font-size:11.500px;letter-spacing:.35px;font-weight:bold">noname1.php5 *</span>
<div class="dd" style="left:701px;top:116px;border-width:4px 4px 0 4px;border-top-color:#6a6a6a"></div>
<svg style="left:715px;top:113px" width="8" height="7" viewBox="0 0 8 7"><path d="M.5 0l7 7M7.500 0l-7 7" stroke="#6a6a6a" stroke-width="1.700"/></svg>
<div style="left:229px;top:128px;width:500px;height:2px;background:#fcf8ee"></div>
<div style="left:229px;top:130px;width:22px;height:407px;background:linear-gradient(to right,#cfe0f9,#e2edfc)"></div>
<div style="left:251px;top:130px;width:38px;height:390px;background:linear-gradient(to right,#c6d9f7,#dbe7fb);border-left:1px solid #7b9fdc;border-top:1px solid #7b9fdc;border-right:1px solid #7b9fdc"></div>
<div style="left:289px;top:130px;width:412px;height:390px;background:#fff;border-top:1px solid #9ab4e0"></div>
<div style="left:296px;top:387px;width:405px;height:16px;background:#ececec"></div>
<span class="ln" style="top:131px">1</span>
<span class="ln" style="top:147px">2</span>
<span class="ln" style="top:163px">3</span>
<span class="ln" style="top:179px">4</span>
<span class="ln" style="top:195px">5</span>
<span class="ln" style="top:211px">6</span>
<span class="ln" style="top:227px">7</span>
<span class="ln" style="top:243px">8</span>
<span class="ln" style="top:259px">9</span>
<span class="ln" style="top:275px">10</span>
<span class="ln" style="top:291px">11</span>
<span class="ln" style="top:307px">12</span>
<span class="ln" style="top:323px">13</span>
<span class="ln" style="top:339px">14</span>
<span class="ln" style="top:355px">15</span>
<span class="ln" style="top:371px">16</span>
<span class="ln" style="top:387px">17</span>
<span class="ln" style="top:403px">18</span>
<span class="ln" style="top:419px">19</span>
<span class="ln" style="top:435px">20</span>
<span class="ln" style="top:451px">21</span>
<span class="ln" style="top:467px">22</span>
<div style="left:284px;top:134px;width:9px;height:9px;background:#fff;border:1px solid #8a8a8a"><div style="left:1px;top:3px;width:5px;height:1px;background:#333"></div></div>
<div style="left:284px;top:150px;width:9px;height:9px;background:#fff;border:1px solid #8a8a8a"><div style="left:1px;top:3px;width:5px;height:1px;background:#333"></div></div>
<div style="left:284px;top:182px;width:9px;height:9px;background:#fff;border:1px solid #8a8a8a"><div style="left:1px;top:3px;width:5px;height:1px;background:#333"></div></div>
<div style="left:284px;top:214px;width:9px;height:9px;background:#fff;border:1px solid #8a8a8a"><div style="left:1px;top:3px;width:5px;height:1px;background:#333"></div></div>
<div style="left:284px;top:278px;width:9px;height:9px;background:#fff;border:1px solid #8a8a8a"><div style="left:1px;top:3px;width:5px;height:1px;background:#333"></div></div>
<span class="cl" style="top:132px"><b class="r">&lt;?php</b></span>
<span class="cl" style="top:148px"><b class="k">namespace</b> <b class="g">MyCompany</b>\<b class="g">Blog</b>;</span>
<span class="cl" style="top:180px"><b class="k">class</b> User {</span>
<span class="cl" style="top:212px">       <b class="k">public function</b> set( <b class="m">$attribute</b>, <b class="m">$value</b> ) {</span>
<span class="cl" style="top:228px">               <b class="m">$this</b>-&gt;<b class="m">$attribute</b> = <b class="m">$value</b>;</span>
<span class="cl" style="top:244px">       }</span>
<span class="cl" style="top:276px">       <b class="k">public function</b> save() {</span>
<span class="cl" style="top:292px">               <b class="k">echo</b> <b class="g">'&lt;p&gt;Blog user '</b> . <b class="m">$this</b>-&gt;fullname . <b class="g">'</b></span>
<span class="cl" style="top:308px">       }</span>
<span class="cl" style="top:340px">}</span>
<span class="cl" style="top:372px"><b class="k">use</b> \<b class="g">MyCompany</b>\<b class="g">Blog</b> ;</span>
<span class="cl" style="top:388px"><b class="m">$user</b>= <b class="k">new</b></span>
<svg style="left:367px;top:401px" width="8" height="3" viewBox="0 0 8 3"><path d="M0 2.500l2-2 2 2 2-2 2 2" fill="none" stroke="#e00000" stroke-width="1"/></svg>
<div style="left:701px;top:130px;width:18px;height:390px;background:linear-gradient(to right,#f1f0e8,#fcfcfa)"></div>
<div class="sbb" style="left:702px;top:131px;width:15px;height:16px"><svg style="left:0;top:0" width="15" height="16" viewBox="0 0 15 16"><path d="M3.5 10.0l4-4 4 4" fill="none" stroke="#4d6185" stroke-width="2.200"/></svg></div>
<div class="sbt" style="left:702px;top:149px;width:15px;height:339px"><div style="left:4px;top:164px;width:6px;height:8px;background:repeating-linear-gradient(#eef4fe 0,#eef4fe 1px,#8cb0f8 1px,#8cb0f8 2px)"></div></div>
<div class="sbb" style="left:702px;top:504px;width:15px;height:16px"><svg style="left:0;top:0" width="15" height="16" viewBox="0 0 15 16"><path d="M3.5 6.0l4 4 4-4" fill="none" stroke="#4d6185" stroke-width="2.200"/></svg></div>
<div style="left:717px;top:130px;width:12px;height:407px;background:#ecdfe9;border-left:2px solid #7fa5e2;border-right:1px solid #7ba2e0"></div>
<div style="left:701px;top:130px;width:28px;height:1px;background:#7ba2e0"></div>
<svg style="left:719px;top:389px" width="9" height="9" viewBox="0 0 9 9"><circle cx="4.500" cy="4.500" r="4" fill="#e03030" stroke="#b01818" stroke-width=".8"/><rect x="2" y="3.700" width="5" height="1.600" fill="#fff"/></svg>
<div style="left:251px;top:520px;width:450px;height:17px;background:linear-gradient(#f8f8f4,#eeede5)"></div>
<div class="sbb" style="left:252px;top:521px;width:15px;height:15px"><svg style="left:0;top:0" width="15" height="15" viewBox="0 0 15 15"><path d="M9.5 3.5l-4 4 4 4" fill="none" stroke="#4d6185" stroke-width="2.200"/></svg></div>
<div class="sbt" style="left:268px;top:521px;width:11px;height:15px"></div>
<div style="left:701px;top:520px;width:18px;height:17px;background:#ece9d8"></div>
<div class="sbb" style="left:685px;top:521px;width:15px;height:15px"><svg style="left:0;top:0" width="15" height="15" viewBox="0 0 15 15"><path d="M5.5 3.5l4 4-4 4" fill="none" stroke="#4d6185" stroke-width="2.200"/></svg></div>
<div style="left:229px;top:537px;width:500px;height:1px;background:#7b9fdc"></div>
<div style="left:274px;top:537px;width:43px;height:17px;background:#eef4fd;border:1px solid #9a9a9a;border-top:none;border-radius:0 0 3px 3px"><span style="left:1px;top:2px;font-size:10.500px">Preview</span></div>
<div style="left:229px;top:537px;width:45px;height:19px;background:#fff;border-bottom:2px solid #ffa51f;border-radius:0 0 3px 3px"><span style="left:6px;top:4px;font-size:10.500px">Source</span></div>
<svg style="left:232px;top:133px" width="16" height="16" viewBox="0 0 16 16"><path d="M3.500 4.500l8.500 7.500M12 4.500l-8.500 7.500" stroke="#000" stroke-width="1.600"/></svg>
<svg style="left:232px;top:154px" width="16" height="16" viewBox="0 0 16 16"><path d="M3.500 7h8.500M3.500 9.300h8.500" stroke="#222" stroke-width="1.100"/><path d="M7.700 2l2.300 3h-4.600zM7.700 14.500l2.300-3h-4.600z" fill="#2a6ad0"/><path d="M7.700 4v2.500M7.700 10v2.500" stroke="#2a6ad0"/></svg>
<svg style="left:232px;top:176px" width="16" height="16" viewBox="0 0 16 16"><path d="M1 3h9M1 5.500h9M1 8h9" stroke="#222" stroke-width="1.300" stroke-dasharray="2 1"/><path d="M13 5v4c0 2-1.500 3-4 3" fill="none" stroke="#2a6ad0" stroke-width="1.600"/><path d="M10 9.500L6.500 12l3.500 2.500z" fill="#2a6ad0"/></svg>
<div style="left:228px;top:197px;width:22px;height:21px;background:#fff;border:1px solid #a8a8a8;border-radius:4px"></div>
<svg style="left:232px;top:199px" width="16" height="16" viewBox="0 0 16 16"><path d="M1 8l3.500-3v6z" fill="#2a6ad0"/><rect x="6.500" y="2.500" width="6" height="11" fill="#fff" stroke="#000" stroke-width="1.300"/><path d="M9 3v10" stroke="#000" stroke-width="1"/><path d="M13.500 3.500v9" stroke="#2a6ad0" stroke-width="1.500" stroke-dasharray="1.500 1"/></svg>
<div style="left:228px;top:219px;width:22px;height:21px;background:#fff;border:1px solid #a8a8a8;border-radius:4px"></div>
<svg style="left:232px;top:221px" width="16" height="16" viewBox="0 0 16 16"><text x="4" y="12" font-size="11.500" font-family="Liberation Sans,sans-serif" fill="#000">#</text></svg>
<svg style="left:232px;top:242px" width="16" height="16" viewBox="0 0 16 16"><text x="3.500" y="12" font-size="12" font-family="Liberation Serif,serif" fill="#000">¶</text></svg>
<div style="left:228px;top:263px;width:22px;height:21px;background:#fff;border:1px solid #a8a8a8;border-radius:4px"></div>
<svg style="left:232px;top:265px" width="16" height="16" viewBox="0 0 16 16"><path d="M2 2.500h12M2 5h12" stroke="#e89020" stroke-width="1.200" stroke-dasharray="3 1"/><path d="M2 3.700h12" stroke="#2a6ad0" stroke-width="1" stroke-dasharray="3 1"/><path d="M4 15l5-5" stroke="#000" stroke-width="1.300"/><path d="M6.500 9l4.500-1-1 4.500z" fill="#000"/></svg>
<svg style="left:232px;top:286px" width="16" height="16" viewBox="0 0 16 16"><path d="M7 2.500h7M9 5h5M7 7.500h7M9 10h5M7 12.500h7" stroke="#222" stroke-width="1.200"/><path d="M1 7.500h4" stroke="#2a6ad0" stroke-width="1.600"/><path d="M4 4.500l3.500 3-3.500 3z" fill="#2a6ad0"/></svg>
<svg style="left:232px;top:308px" width="16" height="16" viewBox="0 0 16 16"><path d="M7 2.500h7M9 5h5M7 7.500h7M9 10h5M7 12.500h7" stroke="#222" stroke-width="1.200" stroke-dasharray="2 .8"/><path d="M3 7.500h4" stroke="#2a6ad0" stroke-width="1.600"/><path d="M4.500 4.500L1 7.500l3.500 3z" fill="#2a6ad0"/></svg>
<svg style="left:232px;top:330px" width="16" height="16" viewBox="0 0 16 16"><path d="M1 2.500l13-2v10l-13 1z" fill="#8a7ac0" stroke="#6a5aa0"/><path d="M2.500 3.700l10-1.500v7l-10 .8z" fill="#58b8f0"/><path d="M5 12l5-.5 1 2.500H4z" fill="#9a8ac8" stroke="#6a5aa0" stroke-width=".6"/></svg>
<!-- code navigator -->
<div class="phdr" style="left:733px;top:105px;width:195px"><span>Code Navigator</span><svg style="left:167px;top:4px" width="7" height="10" viewBox="0 0 7 10"><path d="M1.500 .5h4v5h-4zM4.500 .5v5M0 6h7M3.500 6v3.500" stroke="#000" fill="none" stroke-width="1.100"/></svg><svg style="left:181px;top:5px" width="8" height="7" viewBox="0 0 8 7"><path d="M.5 0l7 7M7.500 0l-7 7" stroke="#000" stroke-width="1"/></svg></div>
<div style="left:735px;top:126px;width:183px;height:46px;border-radius:3px 0 0 3px;background:linear-gradient(#dbe9fc 0,#c6dcf8 40%,#a6c4f0 75%,#86ade6 100%);box-shadow:0 1px 0 #6a8ccc"></div>
<div style="left:917px;top:126px;width:10px;height:47px;border-radius:0 4px 4px 0;background:linear-gradient(#80a6e8 0,#5a86d8 35%,#2a56b8 70%,#0a2a8a 100%)"><div class="chev" style="left:3px;top:36px"><i></i></div></div>
<div style="left:738px;top:129px;width:112px;height:18px;background:#fff"></div>
<div style="left:839px;top:130px;width:11px;height:16px;background:#dfeafb"></div>
<div class="dd" style="left:842px;top:137px"></div>
<svg style="left:855px;top:130px" width="17" height="16" viewBox="0 0 17 16"><path d="M3 2.200c0-1 3.200-1 3.200 0l.6 3h2.400l.6-3c0-1 3.200-1 3.200 0l2.500 9.500c.3 3.800-6.300 3.800-6-.2v-3h-3v3c.3 4-6.300 4-6 .2z" fill="#2b2b2b" stroke="#000" stroke-width=".5"/><path d="M3.600 3l-2 8.500c0 1.500 1 2 1.500 2z" fill="#8c8c8c"/><path d="M10.800 2.600l.5 0 1.800 9-1.200.6z" fill="#9a9a9a"/><path d="M4.500 2.500l1 0-.5 9-1.200 1z" fill="#555"/><ellipse cx="3.700" cy="13.300" rx="2.300" ry="1.100" fill="#6a6a6a"/><ellipse cx="12.300" cy="13.300" rx="2.300" ry="1.100" fill="#6a6a6a"/></svg>
<div style="left:875px;top:127px;width:23px;height:22px;background:linear-gradient(#ffd29c,#ffa860 55%,#ff9648);border:1px solid #00007c"><svg style="left:3px;top:2px" width="16" height="16" viewBox="0 0 16 16"><rect x="4.500" y="5.500" width="10" height="6" fill="#4a9ae8" stroke="#1d5cb8"/><path d="M4 2h11M4 14h11" stroke="#1d5cb8" stroke-width="1.400"/><rect x="0" y="1" width="2.500" height="2.500" fill="#1d5cb8"/><rect x="0" y="5.500" width="2.500" height="2.500" fill="#1d5cb8"/><rect x="0" y="9" width="2.500" height="2.500" fill="#1d5cb8"/><rect x="0" y="13" width="2.500" height="2.500" fill="#1d5cb8"/></svg></div>
<div style="left:737px;top:149px;width:24px;height:22px;background:linear-gradient(#ffd29c,#ffa860 55%,#ff9648);border:1px solid #00007c"><svg style="left:3px;top:2px" width="16" height="16" viewBox="0 0 16 16"><text x="0" y="14" font-size="16" font-weight="bold" font-family="Liberation Serif,serif" fill="#d8a020" stroke="#8a6a10" stroke-width=".4">A</text><path d="M12 1v10M9 8.500l3 4.500 3-4.500z" stroke="#2a9a2a" fill="#2a9a2a" stroke-width="1.600"/></svg></div>
<div style="left:760px;top:149px;width:24px;height:22px;background:linear-gradient(#ffd29c,#ffa860 55%,#ff9648);border:1px solid #00007c"><svg style="left:3px;top:2px" width="16" height="16" viewBox="0 0 16 16"><g transform="rotate(40 8 8)"><path d="M5.500 15V5.500H3.300L6.300 .8l3 4.700H7.500V15z" fill="#3a86e8" stroke="#1a50b0" stroke-width=".7"/><path d="M10.500 1v9.500h2.200l-3 4.700-3-4.700h1.800V1z" fill="#3a86e8" stroke="#1a50b0" stroke-width=".7"/></g></svg></div>
<div style="left:783px;top:149px;width:24px;height:22px;background:linear-gradient(#ffd29c,#ffa860 55%,#ff9648);border:1px solid #00007c"><svg style="left:3px;top:2px" width="16" height="16" viewBox="0 0 16 16"><circle cx="8" cy="8" r="7" fill="#b8a8e0" stroke="#5a4a9a" stroke-width="1.200"/><circle cx="8" cy="8" r="4.500" fill="#dcd4f2"/><text x="4.8" y="11.4" font-size="9.5" font-weight="bold" font-family="Liberation Sans,sans-serif" fill="#111">S</text></svg></div>
<div style="left:805px;top:149px;width:24px;height:22px;background:linear-gradient(#ffd29c,#ffa860 55%,#ff9648);border:1px solid #00007c"><svg style="left:3px;top:2px" width="16" height="16" viewBox="0 0 16 16"><circle cx="8" cy="8" r="7" fill="#4a9ae8" stroke="#1d5cb8" stroke-width="1.200"/><circle cx="8" cy="8" r="4.500" fill="#9accf8"/><rect x="4.500" y="7" width="7" height="2" fill="#103a80"/></svg></div>
<div style="left:828px;top:149px;width:24px;height:22px;background:linear-gradient(#ffd29c,#ffa860 55%,#ff9648);border:1px solid #00007c"><svg style="left:3px;top:2px" width="16" height="16" viewBox="0 0 16 16"><circle cx="8" cy="8" r="7" fill="#f0d040" stroke="#a88a10" stroke-width="1.200"/><circle cx="8" cy="8" r="4.500" fill="#fbf0a0"/><text x="5.1" y="11.4" font-size="9.5" font-weight="bold" font-family="Liberation Sans,sans-serif" fill="#111">#</text></svg></div>
<div style="left:851px;top:149px;width:24px;height:22px;background:linear-gradient(#ffd29c,#ffa860 55%,#ff9648);border:1px solid #00007c"><svg style="left:3px;top:2px" width="16" height="16" viewBox="0 0 16 16"><circle cx="8" cy="8" r="7" fill="#3ab03a" stroke="#1a7a1a" stroke-width="1.200"/><circle cx="8" cy="8" r="4.500" fill="#a0e890"/><path d="M4.500 8h7M8 4.500v7" stroke="#000" stroke-width="1.800"/></svg></div>
<svg style="left:879px;top:152px" width="17" height="16" viewBox="0 0 17 16"><rect x=".5" y="5.500" width="13" height="10" fill="#e4effc" stroke="#3a84d8"/><rect x="2.500" y="9" width="9" height="4.500" fill="#6ab0f0"/><path d="M5 4c2-3 7-4 10-1 2 2 0 5-3 4l-3 1z" fill="#f0c040" stroke="#a87a18" stroke-width=".8"/></svg>
<div class="dd" style="left:900px;top:159px"></div>
<div style="left:734px;top:174px;width:194px;height:340px;background:#fff"></div>
<div style="left:748px;top:183px;width:4px;height:1px;border-top:1px dotted #a8a8a8"></div>
<div style="left:759px;top:191px;width:1px;height:82px;border-left:1px dotted #a8a8a8"></div>
<div style="left:760px;top:273px;width:10px;height:1px;border-top:1px dotted #a8a8a8"></div>
<div style="left:765px;top:201px;width:4px;height:1px;border-top:1px dotted #a8a8a8"></div>
<div style="left:776px;top:207px;width:1px;height:8px;border-left:1px dotted #a8a8a8"></div>
<div style="left:782px;top:219px;width:3px;height:1px;border-top:1px dotted #a8a8a8"></div>
<div style="left:793px;top:226px;width:1px;height:26px;border-left:1px dotted #a8a8a8"></div>
<div style="left:799px;top:237px;width:5px;height:1px;border-top:1px dotted #a8a8a8"></div>
<div style="left:799px;top:255px;width:5px;height:1px;border-top:1px dotted #a8a8a8"></div>
<div style="left:738px;top:179px;width:9px;height:9px;border:1px solid #7a96c0;border-radius:2px;background:linear-gradient(#fff,#ddd8cc)"><div style="left:1px;top:3px;width:5px;height:1px;background:#000"></div></div>
<div style="left:755px;top:197px;width:9px;height:9px;border:1px solid #7a96c0;border-radius:2px;background:linear-gradient(#fff,#ddd8cc)"><div style="left:1px;top:3px;width:5px;height:1px;background:#000"></div></div>
<div style="left:772px;top:215px;width:9px;height:9px;border:1px solid #7a96c0;border-radius:2px;background:linear-gradient(#fff,#ddd8cc)"><div style="left:1px;top:3px;width:5px;height:1px;background:#000"></div></div>
<div style="left:789px;top:233px;width:9px;height:9px;border:1px solid #7a96c0;border-radius:2px;background:linear-gradient(#fff,#ddd8cc)"><div style="left:1px;top:3px;width:5px;height:1px;background:#000"></div><div style="left:3px;top:1px;width:1px;height:5px;background:#000"></div></div>
<div style="left:789px;top:251px;width:9px;height:9px;border:1px solid #7a96c0;border-radius:2px;background:linear-gradient(#fff,#ddd8cc)"><div style="left:1px;top:3px;width:5px;height:1px;background:#000"></div><div style="left:3px;top:1px;width:1px;height:5px;background:#000"></div></div>
<svg style="left:752px;top:175px" width="13" height="16" viewBox="0 0 14 16"><path d="M.5 .5h8l4 4v11h-12z" fill="#dcecfc" stroke="#3a84d8"/><path d="M8.500 .5v4h4" fill="#fff" stroke="#3a84d8"/></svg>
<span style="left:773px;top:178px;font-size:11px">noname1.php5</span>
<span style="left:769px;top:193px;font-size:13px;color:#2a5ad0;letter-spacing:2px">{}</span>
<div style="left:786px;top:192px;width:96px;height:18px;background:#ece9d8"></div>
<span style="left:790px;top:196px;font-size:11px">\MyCompany\Blog</span>
<svg style="left:784px;top:210px" width="17" height="17" viewBox="0 0 17 17"><path d="M5 .5l4 3.500-4 3.500-4-3.500z" fill="#f0a030" stroke="#b87010" stroke-width=".7"/><path d="M7 6l4 4" stroke="#6a8ab8" stroke-width="1.300"/><path d="M12.500 3l3 3-3 3-3-3z" fill="#e060d0" stroke="#9a2a8a" stroke-width=".7"/><path d="M11.500 9.500l3 3-3 3-3-3z" fill="#40c040" stroke="#1a8a1a" stroke-width=".7"/></svg>
<span style="left:807px;top:214px;font-size:11px">class User</span>
<svg style="left:805px;top:231px" width="9" height="11" viewBox="0 0 10 11" preserveAspectRatio="none"><path d="M5 .5l4.500 3L5 6.500.5 3.500z" fill="#f0a0e8"/><path d="M.5 3.500L5 6.500V10.500L.5 7.500z" fill="#c040b8"/><path d="M9.500 3.500L5 6.500v4l4.500-3z" fill="#902a88"/></svg>
<svg style="left:805px;top:249px" width="9" height="11" viewBox="0 0 10 11" preserveAspectRatio="none"><path d="M5 .5l4.500 3L5 6.500.5 3.500z" fill="#f0a0e8"/><path d="M.5 3.500L5 6.500V10.500L.5 7.500z" fill="#c040b8"/><path d="M9.500 3.500L5 6.500v4l4.500-3z" fill="#902a88"/></svg>
<span style="left:824px;top:232px;font-size:11px">public save()</span>
<span style="left:824px;top:250px;font-size:11px">public set($attribute,</span>
<svg style="left:770px;top:267px" width="9" height="11" viewBox="0 0 10 11" preserveAspectRatio="none"><path d="M5 .5l4.500 3L5 6.500.5 3.500z" fill="#a0e8a0"/><path d="M.5 3.500L5 6.500V10.500L.5 7.500z" fill="#40b040"/><path d="M9.500 3.500L5 6.500v4l4.500-3z" fill="#2a8a2a"/></svg>
<span style="left:790px;top:268px;font-size:11px">$user</span>
<div style="left:734px;top:513px;width:194px;height:17px;background:linear-gradient(#f8f8f4,#eeede5)"></div>
<div class="sbb" style="left:735px;top:514px;width:15px;height:15px"><svg style="left:0;top:0" width="15" height="15" viewBox="0 0 15 15"><path d="M9.5 3.5l-4 4 4 4" fill="none" stroke="#4d6185" stroke-width="2.200"/></svg></div>
<div class="sbb" style="left:911px;top:514px;width:16px;height:15px"><svg style="left:0;top:0" width="16" height="15" viewBox="0 0 16 15"><path d="M6.0 3.5l4 4-4 4" fill="none" stroke="#4d6185" stroke-width="2.200"/></svg></div>
<div class="sbt" style="left:751px;top:514px;width:131px;height:15px;background:linear-gradient(#d0dffc,#b9cdfb 70%,#a9c0f6)"><div style="left:60px;top:4px;width:8px;height:6px;background:repeating-linear-gradient(to right,#eef4fe 0,#eef4fe 1px,#8cb0f8 1px,#8cb0f8 2px)"></div></div>
<div style="left:735px;top:531px;width:193px;height:25px;border-radius:0 0 4px 0;background:linear-gradient(#dbe9fc 0,#c6dcf8 40%,#a6c4f0 75%,#86ade6 100%);box-shadow:0 1px 0 #6a8ccc"></div>
<div style="left:737px;top:533px;width:26px;height:22px;background:linear-gradient(#ffd29c,#ffa860 55%,#ff9648);border:1px solid #00007c"><span style="left:2px;top:5px;font-size:10.300px;letter-spacing:-.3px">PHP</span></div>
<span style="left:766px;top:539px;font-size:10.300px;letter-spacing:-.3px">HTML</span><span style="left:798px;top:539px;font-size:10.300px;letter-spacing:-.3px">CSS</span><span style="left:824px;top:539px;font-size:10.300px;letter-spacing:-.3px">JS</span>
<!-- right dock strip -->
<div style="left:928px;top:106px;width:24px;height:507px;background:#dce9fb"></div>
<div class="vt" style="left:930px;top:109px;height:87px;width:20px;border-right:none"><svg style="left:3px;top:4px" width="15" height="15" viewBox="0 0 15 15"><rect x=".5" y=".5" width="14" height="14" rx="2" fill="#f8e080" stroke="#c89820"/><path d="M7.500 3l4 4h-8z" fill="#fff" stroke="#c89820" stroke-width=".7"/><path d="M3.500 9h8M3.500 11.500h8" stroke="#fff" stroke-width="1.400"/></svg><span class="l" style="left:4px;top:24px">Launch Box</span></div>
<div class="vt" style="left:930px;top:200px;height:75px;width:20px;border-right:none"><svg style="left:4px;top:4px" width="13" height="16" viewBox="0 0 13 16"><path d="M.5 3c0-3 12-3 12 0v10c0 3-12 3-12 0z" fill="#f8e070" stroke="#c8a020"/><path d="M.5 3c0 3 12 3 12 0M.5 8c0 3 12 3 12 0" fill="none" stroke="#c8a020"/></svg><span class="l" style="left:4px;top:23px">DB Client</span></div>
<div class="vt" style="left:930px;top:279px;height:101px;width:20px;border-right:none"><div style="left:0;top:0;width:20px;height:22px;background:#dbe6fa"></div><svg style="left:2px;top:3px" width="16" height="16" viewBox="0 0 16 16"><circle cx="8" cy="8" r="7.300" fill="#a040b0" stroke="#6a2a80"/><circle cx="8" cy="8" r="5" fill="#c070d0"/><text x="5.200" y="11.300" font-size="9" font-weight="bold" font-family="Liberation Sans,sans-serif" fill="#fff">F</text></svg><svg style="left:2px;top:26px" width="16" height="16" viewBox="0 0 16 16"><circle cx="8" cy="8" r="7.300" fill="#3a8ae8" stroke="#1d5cb8"/><circle cx="8" cy="8" r="5.500" fill="#6ab0f8"/><text x="5" y="12" font-size="11" font-weight="bold" font-family="Liberation Sans,sans-serif" fill="#fff">?</text></svg><span class="l" style="left:4px;top:48px">Help</span></div>
<div class="vt" style="left:930px;top:385px;height:76px;width:20px;border-right:none"><svg style="left:3px;top:4px" width="15" height="13" viewBox="0 0 15 13"><rect x=".5" y=".5" width="14" height="12" fill="#6a6a6a" stroke="#4a8ae0" stroke-width="1.400"/><path d="M3.500 3.500l6 3-6 3" fill="none" stroke="#e8e8e8" stroke-width="1.600"/></svg><span class="l" style="left:4px;top:25px">Terminals</span></div>
<div class="vt" style="left:930px;top:466px;height:99px;width:20px;border-right:none"><svg style="left:2px;top:3px" width="16" height="16" viewBox="0 0 16 16"><circle cx="8" cy="8" r="7.300" fill="#3a8ae8" stroke="#1d5cb8"/><circle cx="8" cy="8" r="5.500" fill="#9acdf8"/><text x="4.800" y="11.500" font-size="10" font-weight="bold" font-family="Liberation Sans,sans-serif" fill="#fff">S</text></svg><span class="l" style="left:4px;top:25px">NuSoap Client</span></div>
<!-- bottom: todo list -->
<div style="left:29px;top:557px;width:899px;height:4px;background:#98b9ee"></div>
<div class="phdr" style="left:28px;top:561px;width:900px"><span>To-Do List</span><svg style="left:872px;top:4px" width="7" height="10" viewBox="0 0 7 10"><path d="M1.500 .5h4v5h-4zM4.500 .5v5M0 6h7M3.500 6v3.500" stroke="#000" fill="none" stroke-width="1.100"/></svg><svg style="left:886px;top:5px" width="8" height="7" viewBox="0 0 8 7"><path d="M.5 0l7 7M7.500 0l-7 7" stroke="#000" stroke-width="1"/></svg></div>
<div style="left:29px;top:581px;width:899px;height:8px;background:#fff;border-top:1px solid #9ab4e0;overflow:hidden"><div style="left:0px;top:0px;width:447px;height:8px;background:#ece9d8"></div><div style="left:524px;top:0px;width:4px;height:8px;background:#5a6fd8"></div><div style="left:528px;top:0px;width:371px;height:8px;background:#e4e4e4"></div><div style="left:726px;top:0px;width:9px;height:8px;background:#fff"></div><span style="left:7px;top:5px;font-size:11px">Action</span><span style="left:122px;top:5px;font-size:11px">Pr</span><span style="left:154px;top:5px;font-size:11px">Location</span><span style="left:275px;top:5px;font-size:11px">Source</span><span style="left:324px;top:5px;font-size:11px">Category</span><div style="left:117px;top:2px;width:1px;height:8px;background:#aca899"></div><div style="left:149px;top:2px;width:1px;height:8px;background:#aca899"></div><div style="left:270px;top:2px;width:1px;height:8px;background:#aca899"></div><div style="left:319px;top:2px;width:1px;height:8px;background:#aca899"></div><div style="left:439px;top:2px;width:1px;height:8px;background:#aca899"></div></div>
<div style="left:28px;top:592px;width:900px;height:21px;background:linear-gradient(#c4d9f8 0,#a9c6f3 50%,#8db1ea 100%)"></div>
<div style="left:28px;top:589px;width:900px;height:2px;background:#f3733c"></div>
<div style="left:28px;top:591px;width:900px;height:1px;background:#0a1a8a"></div>
<div style="left:32px;top:591px;width:80px;height:21px;background:linear-gradient(#f3733c,#fbb26c 50%,#f9904a);border:1px solid #00007c;border-top:none"><svg style="left:3px;top:1px" width="15" height="16" viewBox="0 0 15 16"><path d="M.5 .5h8l3 3v12h-11z" fill="#dcecfc" stroke="#3a84d8"/><path d="M13.500 2.500l1.500 1.500-6.500 7.500-2.500 1 .5-2.500z" fill="#f8d050" stroke="#a87a18" stroke-width=".7"/></svg><span style="left:23px;top:6px;font-size:11px;letter-spacing:-.2px">To-Do List</span></div>
<svg style="left:117px;top:593px" width="16" height="16" viewBox="0 0 16 16"><path d="M.5 .5h8l3 3v11h-11z" fill="#dcecfc" stroke="#3a84d8"/><path d="M5 6l9 9M14 6l-9 9" stroke="#e02020" stroke-width="2.600"/></svg>
<span style="left:135px;top:596px;font-size:11px;color:#6a6a6a">Problems</span>
<div style="left:187px;top:594px;width:2px;height:16px;border-left:1px solid #fff;border-right:1px solid #6a8ccc"></div>
<div style="left:4px;top:613px;width:948px;height:19px;background:linear-gradient(#f6f5ee 0,#ece9d8 20%,#ece9d8 100%);border-top:1px solid #c5c2b2"></div>
<div style="left:586px;top:617px;width:2px;height:14px;border-left:1px solid #c5c2b2;border-right:1px solid #fff"></div>
<div style="left:649px;top:617px;width:2px;height:14px;border-left:1px solid #c5c2b2;border-right:1px solid #fff"></div>
<div style="left:740px;top:617px;width:2px;height:14px;border-left:1px solid #c5c2b2;border-right:1px solid #fff"></div>
<div style="left:772px;top:617px;width:2px;height:14px;border-left:1px solid #c5c2b2;border-right:1px solid #fff"></div>
<div style="left:803px;top:617px;width:2px;height:14px;border-left:1px solid #c5c2b2;border-right:1px solid #fff"></div>
<div style="left:840px;top:617px;width:2px;height:14px;border-left:1px solid #c5c2b2;border-right:1px solid #fff"></div>
<div style="left:872px;top:617px;width:2px;height:14px;border-left:1px solid #c5c2b2;border-right:1px solid #fff"></div>
<div style="left:901px;top:617px;width:2px;height:14px;border-left:1px solid #c5c2b2;border-right:1px solid #fff"></div>
<div style="left:931px;top:617px;width:2px;height:14px;border-left:1px solid #c5c2b2;border-right:1px solid #fff"></div>
<span style="left:593px;top:618px;font-size:11px;letter-spacing:-.2px">17:12</span>
<span style="left:681px;top:618px;font-size:11px;letter-spacing:-.2px">UTF-8</span>
<span style="left:746px;top:618px;font-size:11px;letter-spacing:-.2px">MOD</span>
<span style="left:780px;top:618px;font-size:11px;letter-spacing:-.2px">INS</span>
<span style="left:845px;top:618px;font-size:11px;letter-spacing:-.2px">NUM</span>
<svg style="left:940px;top:620px" width="12" height="12" viewBox="0 0 12 12"><g fill="#b8b4a2"><rect x="8" y="0" width="2" height="2"/><rect x="4" y="4" width="2" height="2"/><rect x="8" y="4" width="2" height="2"/><rect x="0" y="8" width="2" height="2"/><rect x="4" y="8" width="2" height="2"/><rect x="8" y="8" width="2" height="2"/></g></svg>
<!-- autocomplete popup -->
<div style="left:366px;top:403px;width:330px;height:163px;background:#fff;border-left:1px solid #808080;border-top:1px solid #808080;box-shadow:2px 2px 3px rgba(0,0,0,.55)"></div>
<div style="left:367px;top:404px;width:327px;height:18px;background:#316ac5"></div>
<div style="left:694px;top:404px;width:2px;height:162px;background:#aca899"></div>
<div style="left:367px;top:548px;width:328px;height:18px;background:linear-gradient(#f4f2e8,#e4e0cc);border-top:1px solid #c8c4b0"></div>
<div style="left:386px;top:550px;width:2px;height:14px;border-left:1px solid #c5c2b2;border-right:1px solid #fff"></div>
<svg style="left:682px;top:553px" width="12" height="12" viewBox="0 0 12 12"><g fill="#b8b4a2"><rect x="8" y="0" width="2" height="2"/><rect x="4" y="4" width="2" height="2"/><rect x="8" y="4" width="2" height="2"/><rect x="0" y="8" width="2" height="2"/><rect x="4" y="8" width="2" height="2"/><rect x="8" y="8" width="2" height="2"/></g></svg>
<span style="left:384px;top:408px;font-size:11px;letter-spacing:-.2px;color:#fff">namespace</span><span style="left:444px;top:408px;font-size:11px;color:#fff">\MyCompany\Blog</span>
<span style="left:384px;top:426px;font-size:11px;letter-spacing:-.2px;color:#000">alias</span><span style="left:444px;top:426px;font-size:11px;color:#000">Blog</span>
<span style="left:384px;top:444px;font-size:11px;letter-spacing:-.2px;color:#000">class</span><span style="left:444px;top:444px;font-size:11px;color:#000">Blog\User</span>
<span style="left:384px;top:462px;font-size:11px;letter-spacing:-.2px;color:#000">class</span><span style="left:444px;top:462px;font-size:11px;color:#000">User</span>
<span style="left:369px;top:406px;font-size:12px;color:#1a2c90;opacity:.6;letter-spacing:1.500px">{}</span>
<svg style="left:367px;top:423px" width="17" height="16" viewBox="0 0 17 16"><g fill="none" stroke="#5a8ad0" stroke-width="2.200"><rect x="8.500" y="1.500" width="7" height="5" rx="2.500" transform="rotate(-40 12 4)"/><rect x="1" y="9.500" width="7" height="5" rx="2.500" transform="rotate(-40 4.500 12)"/><path d="M5.500 11L11 5.500" stroke="#3a6ab8"/></g></svg>
<svg style="left:367px;top:441px" width="17" height="17" viewBox="0 0 17 17"><path d="M5 .5l4 3.500-4 3.500-4-3.500z" fill="#f0a030" stroke="#b87010" stroke-width=".7"/><path d="M7 6l4 4" stroke="#6a8ab8" stroke-width="1.300"/><path d="M12.500 3l3 3-3 3-3-3z" fill="#e060d0" stroke="#9a2a8a" stroke-width=".7"/><path d="M11.500 9.500l3 3-3 3-3-3z" fill="#40c040" stroke="#1a8a1a" stroke-width=".7"/></svg>
<svg style="left:367px;top:459px" width="17" height="17" viewBox="0 0 17 17"><path d="M5 .5l4 3.500-4 3.500-4-3.500z" fill="#f0a030" stroke="#b87010" stroke-width=".7"/><path d="M7 6l4 4" stroke="#6a8ab8" stroke-width="1.300"/><path d="M12.500 3l3 3-3 3-3-3z" fill="#e060d0" stroke="#9a2a8a" stroke-width=".7"/><path d="M11.500 9.500l3 3-3 3-3-3z" fill="#40c040" stroke="#1a8a1a" stroke-width=".7"/></svg>
<svg style="left:537px;top:456px" width="13" height="21" viewBox="0 0 13 21"><path d="M.5 .5v16l3.800-3.600 3.200 7.600 2.400-1-3.200-7.400h5.300z" fill="#fff" stroke="#000" stroke-width="1"/></svg>
</div><!-- s -->
</div><!-- client -->
<div style="left:0;top:632px;width:956px;height:4px;background:linear-gradient(#0855dd,#0a4fd8 40%,#0831d9 70%,#001ea0)"></div>
</div><!-- win -->
</body></html>
